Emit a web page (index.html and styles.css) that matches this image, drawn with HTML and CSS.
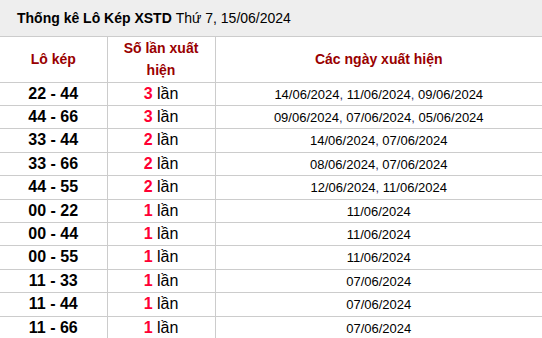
FILE: index.html
```html
<!DOCTYPE html>
<html lang="vi">
<head>
<meta charset="utf-8">
<title>Thống kê Lô Kép XSTD</title>
<link rel="stylesheet" href="styles.css">
</head>
<body>
<div class="title"><b>Thống kê Lô Kép XSTD</b>&nbsp;Thứ 7, 15/06/2024</div>
<table class="stats">
  <thead>
    <tr>
      <th class="c1">Lô kép</th>
      <th class="c2">Số lần xuất hiện</th>
      <th class="c3">Các ngày xuất hiện</th>
    </tr>
  </thead>
  <tbody>
    <tr><td class="pair">22 - 44</td><td class="count"><b>3</b> lần</td><td class="dates">14/06/2024<span class="sep">,</span> 11/06/2024<span class="sep">,</span> 09/06/2024</td></tr>
    <tr><td class="pair">44 - 66</td><td class="count"><b>3</b> lần</td><td class="dates">09/06/2024<span class="sep">,</span> 07/06/2024<span class="sep">,</span> 05/06/2024</td></tr>
    <tr><td class="pair">33 - 44</td><td class="count"><b>2</b> lần</td><td class="dates">14/06/2024<span class="sep">,</span> 07/06/2024</td></tr>
    <tr><td class="pair">33 - 66</td><td class="count"><b>2</b> lần</td><td class="dates">08/06/2024<span class="sep">,</span> 07/06/2024</td></tr>
    <tr><td class="pair">44 - 55</td><td class="count"><b>2</b> lần</td><td class="dates">12/06/2024<span class="sep">,</span> 11/06/2024</td></tr>
    <tr><td class="pair">00 - 22</td><td class="count"><b>1</b> lần</td><td class="dates">11/06/2024</td></tr>
    <tr><td class="pair">00 - 44</td><td class="count"><b>1</b> lần</td><td class="dates">11/06/2024</td></tr>
    <tr><td class="pair">00 - 55</td><td class="count"><b>1</b> lần</td><td class="dates">11/06/2024</td></tr>
    <tr><td class="pair">11 - 33</td><td class="count"><b>1</b> lần</td><td class="dates">07/06/2024</td></tr>
    <tr><td class="pair">11 - 44</td><td class="count"><b>1</b> lần</td><td class="dates">07/06/2024</td></tr>
    <tr><td class="pair">11 - 66</td><td class="count"><b>1</b> lần</td><td class="dates">07/06/2024</td></tr>
  </tbody>
</table>
</body>
</html>
```
FILE: styles.css
```css
html, body {
  margin: 0;
  padding: 0;
  background: #fff;
  font-family: "Liberation Sans", Arial, sans-serif;
  color: #000;
}

.title {
  height: 37px;
  box-sizing: border-box;
  background: #eeeeee;
  border-bottom: 1px solid #cccccc;
  padding: 0 0 1px 17px;
  display: flex;
  align-items: center;
  font-size: 14px;
  white-space: nowrap;
}

.stats {
  width: 542px;
  border-collapse: collapse;
  table-layout: fixed;
}

.stats th,
.stats td {
  border: 1px solid #cccccc;
  text-align: center;
  vertical-align: middle;
}

.stats tr > :first-child { border-left: none; }
.stats tr > :last-child { border-right: none; }
.stats thead th { border-top: none; }

.stats th {
  font-size: 14px;
  font-weight: bold;
  color: #990000;
  line-height: 22px;
  padding: 0 12px;
  height: 45px;
  box-sizing: border-box;
}

.c1 { width: 107px; }
.c2 { width: 108px; }

.stats td {
  padding: 2px 2px;
  font-size: 16px;
  line-height: 18.4px;
}

.stats td.pair { font-weight: bold; }

.stats td.count b { color: #ff0033; }

.stats td.dates { font-size: 13px; padding-top: 3px; padding-bottom: 1px; }

.sep { color: #333366; }
```
